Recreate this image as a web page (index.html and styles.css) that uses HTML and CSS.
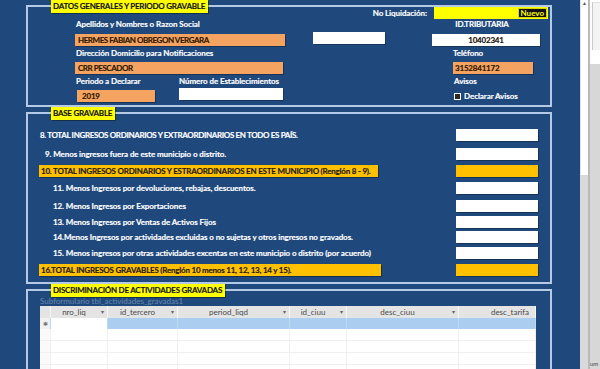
FILE: index.html
```html
<!DOCTYPE html>
<html lang="es">
<head>
<meta charset="utf-8">
<title>Liquidación</title>
<link rel="stylesheet" href="styles.css">
</head>
<body>
<div class="app">
  <div class="form">
    <section class="box box1">
      <div class="legend">DATOS GENERALES Y PERIODO GRAVABLE</div>
      <div class="row-a">
        <span class="lbl liq-lbl">No Liquidación:</span>
        <div class="liq"><span class="nuevo">Nuevo</span></div>
      </div>
      <div class="row-b">
        <span class="lbl w-name">Apellidos y Nombres o Razon Social</span>
        <span class="lbl w-id">ID.TRIBUTARIA</span>
      </div>
      <div class="row-c">
        <div class="field orange f-name">HERMES FABIAN OBREGON VERGARA</div>
        <div class="field white f-extra"></div>
        <div class="field white f-id">10402341</div>
      </div>
      <div class="row-d">
        <span class="lbl w-dir">Dirección Domicilio para Notificaciones</span>
        <span class="lbl">Teléfono</span>
      </div>
      <div class="row-e">
        <div class="field orange f-dir">CRR PESCADOR</div>
        <div class="field orange f-tel">3152841172</div>
      </div>
      <div class="row-f">
        <span class="lbl w-per">Periodo a Declarar</span>
        <span class="lbl w-num">Número de Establecimientos</span>
        <span class="lbl">Avisos</span>
      </div>
      <div class="row-g">
        <div class="field orange f-per">2019</div>
        <div class="field white f-num"></div>
        <div class="check"><span class="box-chk"></span><span class="lbl">Declarar Avisos</span></div>
      </div>
    </section>

    <section class="box box2">
      <div class="legend">BASE GRAVABLE</div>
      <div class="rows">
        <div class="line"><span class="lbl l8">8. TOTAL INGRESOS ORDINARIOS Y EXTRAORDINARIOS EN TODO ES PAÍS.</span><div class="inp"></div></div>
        <div class="line"><span class="lbl l9">9. Menos ingresos fuera de este municipio o distrito.</span><div class="inp"></div></div>
        <div class="line"><span class="lblbox"><span class="bar b10">10. TOTAL INGRESOS ORDINARIOS Y ESTRAORDINARIOS EN ESTE MUNICIPIO (Renglón 8 - 9).</span></span><div class="inp gold"></div></div>
        <div class="line"><span class="lbl ln">11. Menos Ingresos por devoluciones, rebajas, descuentos.</span><div class="inp"></div></div>
        <div class="line"><span class="lbl ln">12. Menos Ingresos por Exportaciones</span><div class="inp"></div></div>
        <div class="line"><span class="lbl ln">13. Menos Ingresos por Ventas de Activos Fijos</span><div class="inp"></div></div>
        <div class="line"><span class="lbl ln">14.Menos Ingresos por actividades excluidas o no sujetas y otros ingresos no gravados.</span><div class="inp"></div></div>
        <div class="line"><span class="lbl ln">15. Menos ingresos por otras actividades excentas en este municipio o distrito (por acuerdo)</span><div class="inp"></div></div>
        <div class="line"><span class="lblbox"><span class="bar b16">16.TOTAL INGRESOS GRAVABLES (Renglón 10 menos 11, 12, 13, 14 y 15).</span></span><div class="inp gold"></div></div>
      </div>
    </section>

    <section class="box box3">
      <div class="legend">DISCRIMINACIÓN DE ACTIVIDADES GRAVADAS</div>
      <div class="subname">Subformulario tbl_actividades_gravadas1</div>
      <div class="grid">
        <div class="ghead">
          <div class="gc sel"></div>
          <div class="gc"><span class="ht">nro_liq</span><span class="arr">▾</span></div>
          <div class="gc"><span class="ht">id_tercero</span><span class="arr">▾</span></div>
          <div class="gc"><span class="ht">period_liqd</span><span class="arr">▾</span></div>
          <div class="gc"><span class="ht">id_ciuu</span><span class="arr">▾</span></div>
          <div class="gc"><span class="ht">desc_ciuu</span><span class="arr">▾</span></div>
          <div class="gc last"><span class="ht">desc_tarifa</span></div>
        </div>
        <div class="grow newrow">
          <div class="gc sel">✱</div>
          <div class="gc cur"></div>
          <div class="gc"></div>
          <div class="gc"></div>
          <div class="gc"></div>
          <div class="gc"></div>
          <div class="gc"></div>
        </div>
        <div class="grow empty"><div class="gc sel"></div><div class="gc"></div><div class="gc"></div><div class="gc"></div><div class="gc"></div><div class="gc"></div><div class="gc"></div></div>
        <div class="grow empty"><div class="gc sel"></div><div class="gc"></div><div class="gc"></div><div class="gc"></div><div class="gc"></div><div class="gc"></div><div class="gc"></div></div>
        <div class="grow empty"><div class="gc sel"></div><div class="gc"></div><div class="gc"></div><div class="gc"></div><div class="gc"></div><div class="gc"></div><div class="gc"></div></div>
        <div class="grow empty"><div class="gc sel"></div><div class="gc"></div><div class="gc"></div><div class="gc"></div><div class="gc"></div><div class="gc"></div><div class="gc"></div></div>
      </div>
    </section>
  </div>
  <div class="vscroll"><div class="thumb"><span class="up">▲</span></div></div>
  <div class="divider"></div>
  <div class="side">
    <div class="side-top"><div class="side-frame"></div></div>
    <div class="side-bottom"><span class="um">um</span></div>
  </div>
</div>
</body>
</html>
```

FILE: styles.css
```css
* { box-sizing: border-box; margin: 0; padding: 0; }

body {
  width: 600px;
  height: 369px;
  overflow: hidden;
  font-family: Lato, "Open Sans", sans-serif;
  font-weight: 700;
  font-size: 8px;
  background: #d8d8d8;
}

.app { display: flex; height: 369px; overflow: hidden; }

.form {
  width: 580px;
  flex-shrink: 0;
  background: #1f497d;
  padding: 5px 0 0 26px;
  display: flex;
  flex-direction: column;
  gap: 5px;
  overflow: hidden;
}

.box {
  position: relative;
  width: 526px;
  border: 2px solid #b3c9e6;
  flex-shrink: 0;
}
.box1 { height: 102px; }
.box2 { height: 172px; }
.box3 { height: 120px; }

.legend {
  position: absolute;
  top: -7px;
  left: 23px;
  height: 13px;
  line-height: 13px;
  padding: 0 3px 0 2px;
  background: #ffff00;
  color: #14141e;
  white-space: nowrap;
  letter-spacing: -0.25px;
  -webkit-text-stroke: 0.15px #14141e;
  box-shadow: 1px 1px 0 rgba(0,0,0,0.35);
}

.lbl {
  color: #ffffff;
  white-space: nowrap;
  flex-shrink: 0;
  letter-spacing: -0.08px;
  -webkit-text-stroke: 0.15px #ffffff;
}

.field {
  height: 12px;
  line-height: 12px;
  flex-shrink: 0;
  color: #2e1600;
  padding-left: 3px;
  white-space: nowrap;
  overflow: hidden;
  letter-spacing: -0.45px;
  -webkit-text-stroke: 0.15px #2e1600;
}
.orange { background: #f4a361; box-shadow: 1px 1px 0 rgba(0,0,0,0.3); }
.white { background: #ffffff; box-shadow: 1px 1px 0 rgba(0,0,0,0.25); }

/* box 1 rows */
.row-a {
  height: 12px;
  display: flex;
  justify-content: flex-end;
  align-items: center;
  padding-right: 2px;
}
.liq-lbl { margin-right: 7px; }
.liq {
  width: 114px;
  height: 12px;
  background: #ffff00;
  display: flex;
  justify-content: flex-end;
  align-items: center;
  padding-right: 1px;
}
.nuevo {
  background: #111;
  color: #ffff00;
  border: 1px solid #d8d800;
  height: 10px;
  line-height: 8px;
  padding: 0 2px;
}

.row-b { display: flex; height: 9px; line-height: 9px; margin-top: 1px; }
.w-name { margin-left: 48px; width: 352px; }
.w-id { width: 108px; text-align: center; letter-spacing: -0.2px; }

.row-c { display: flex; align-items: flex-start; height: 14px; margin-top: 3px; }
.f-name { margin-left: 47px; margin-top: 2px; width: 210px; }
.f-extra { margin-left: 28px; width: 72px; }
.f-id { margin-left: 47px; margin-top: 2px; width: 108px; text-align: center; color: #111; padding-left: 0; letter-spacing: -0.2px; }

.row-d { display: flex; height: 9px; line-height: 9px; margin-top: 3px; }
.w-dir { margin-left: 48px; width: 377px; }

.row-e { display: flex; height: 12px; margin-top: 4px; }
.f-dir { margin-left: 47px; width: 208px; }
.f-tel { margin-left: 170px; width: 80px; padding-left: 2px; letter-spacing: -0.2px; }

.row-f { display: flex; height: 9px; line-height: 9px; margin-top: 3px; }
.w-per { margin-left: 48px; width: 103px; }
.w-num { width: 275px; }

.row-g { display: flex; align-items: flex-start; height: 15px; margin-top: 1px; }
.f-per { margin-left: 49px; margin-top: 3px; width: 78px; padding-left: 5px; letter-spacing: -0.2px; }
.f-num { margin-left: 24px; margin-top: 1px; width: 104px; }
.check { margin-left: 171px; margin-top: 5px; display: flex; align-items: center; gap: 3px; height: 9px; line-height: 9px; }
.box-chk {
  width: 7px;
  height: 7px;
  background: #2a2a2a;
  border: 1.5px solid #ffffff;
  flex-shrink: 0;
}

/* box 2 */
.rows {
  padding-top: 15px;
  display: grid;
  grid-template-rows: 19px 17px 17px 18px 16px 15px 16px 17px 12px;
  align-items: start;
}
.line { display: flex; height: 12px; align-items: center; }
.line .lbl { width: 428px; line-height: 12px; }
.l8 { padding-left: 12px; letter-spacing: -0.35px; }
.l9 { padding-left: 17px; }
.ln { padding-left: 25px; }
.lblbox { width: 428px; flex-shrink: 0; display: flex; }
.bar {
  margin-left: 11px;
  height: 12px;
  line-height: 12px;
  background: #ffc000;
  color: #1e1a10;
  padding-left: 2px;
  white-space: nowrap;
  letter-spacing: -0.22px;
  -webkit-text-stroke: 0.15px #1e1a10;
  box-shadow: 1px 1px 0 rgba(0,0,0,0.35);
}
.b10 { width: 339px; }
.b16 { width: 342px; }
.inp {
  width: 82px;
  height: 12px;
  background: #ffffff;
  flex-shrink: 0;
  box-shadow: 1px 1px 0 rgba(0,0,0,0.3);
}
.inp.gold { background: #ffc000; }

/* box 3 */
.subname {
  margin: 5px 0 0 12px;
  height: 10px;
  line-height: 10px;
  font-weight: 400;
  color: #6b86ad;
  white-space: nowrap;
}
.grid {
  margin-left: 12px;
  width: 496px;
  background: #ffffff;
  font-weight: 400;
}
.ghead, .grow {
  display: grid;
  grid-template-columns: 11px 57px 70px 112px 57px 112px 77px;
}
.ghead { height: 12px; background: #e4e4e4; color: #4a4a4a; }
.ghead .gc {
  display: flex;
  align-items: center;
  border-right: 1px solid #f6f6f6;
  line-height: 12px;
}
.ghead .ht { flex: 1; text-align: center; white-space: nowrap; }
.ghead .arr { width: 10px; font-size: 6px; color: #666; text-align: center; }
.ghead .last .ht { text-align: right; padding-right: 6px; }
.ghead .sel { background: #e4e4e4; }

.grow { height: 12px; }
.grow .gc { border-right: 1px solid #f0f0f0; border-bottom: 1px solid #f0f0f0; }
.newrow { height: 11px; }
.newrow .gc { background: #aacdf0; border-right: 1px solid #bcd8f3; border-bottom: none; }
.newrow .sel {
  background: #f0f0f0;
  color: #777;
  font-size: 6px;
  line-height: 11px;
  text-align: center;
}
.newrow .cur { background: #ffffff; }
.empty .sel { background: #fafafa; }

/* right chrome */
.vscroll { width: 8px; flex-shrink: 0; background: #d9d9d9; }
.thumb {
  height: 175px;
  background: #ffffff;
  border-left: 1px solid #e2e2e2;
  text-align: center;
  font-size: 5px;
  line-height: 6px;
  color: #555;
}
.divider { width: 2px; flex-shrink: 0; background: #b9b9b9; }
.side { width: 10px; flex-shrink: 0; display: flex; flex-direction: column; }
.side-top { height: 64px; background: #ffffff; padding: 2px 0 14px 2px; }
.side-frame { height: 48px; border-left: 1px solid #c9c9c9; border-top: 1px solid #e1e1e1; background: #f3f3f3; }
.side-bottom { flex: 1; background: #d7d7d7; display: flex; align-items: flex-end; }
.um { font-size: 6px; font-weight: 400; color: #444; line-height: 8px; padding-bottom: 1px; }
```
